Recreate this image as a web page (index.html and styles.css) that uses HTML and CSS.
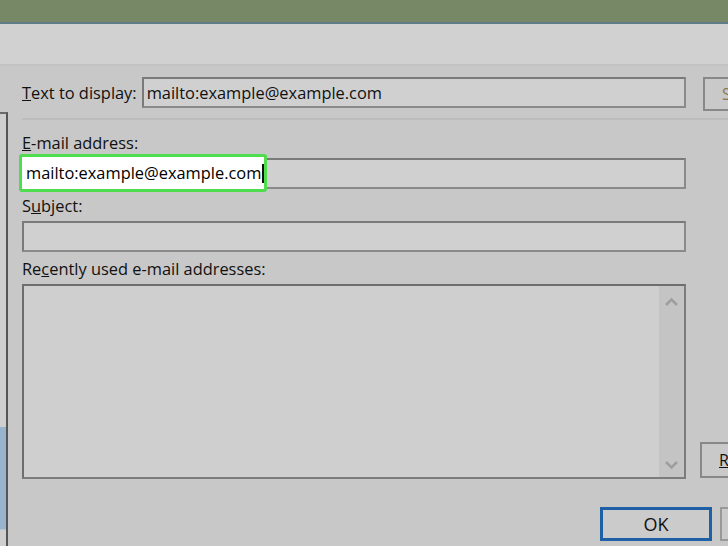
FILE: index.html
```html
<!DOCTYPE html>
<html lang="en">

<head>
    <meta charset="UTF-8">
    <title>Insert Hyperlink</title>
    <link rel="stylesheet" href="styles.css">
</head>

<body>
    <div class="title-bar"></div>
    <div class="header-band"></div>

    <div class="main">
        <div class="side-pane">
            <div class="side-pane-selected"></div>
        </div>

        <div class="content">
            <div class="dialog-body">
                <div class="form">
                    <div class="display-row">
                        <label class="field-label"><u>T</u>ext to display:</label>
                        <div class="text-box display-box">mailto:example@example.com</div>
                    </div>
                    <hr class="separator">

                    <label class="field-label block-label email-label"><u>E</u>-mail address:</label>
                    <div class="email-wrap">
                        <div class="text-box"></div>
                        <div class="highlight">mailto:example@example.com<span class="caret"></span></div>
                    </div>

                    <label class="field-label block-label">S<u>u</u>bject:</label>
                    <div class="text-box"></div>

                    <label class="field-label block-label">Re<u>c</u>ently used e-mail addresses:</label>
                    <div class="list-box">
                        <div class="scrollbar">
                            <svg width="15" height="10" viewBox="0 0 15 10"><path d="M2 8 L7.5 2.5 L13 8" fill="none" stroke="#9e9e9e" stroke-width="2.6"/></svg>
                            <svg width="15" height="10" viewBox="0 0 15 10"><path d="M2 2 L7.5 7.5 L13 2" fill="none" stroke="#9e9e9e" stroke-width="2.6"/></svg>
                        </div>
                    </div>
                </div>

                <div class="side-buttons">
                    <button class="side-button top-button">S</button>
                    <button class="side-button bottom-button"><u>R</u></button>
                </div>
            </div>

            <div class="footer">
                <button class="ok-button">OK</button>
                <button class="cancel-button"></button>
            </div>
        </div>
    </div>
</body>

</html>
```

FILE: styles.css
```css
body {
    margin: 0;
    background-color: #c8c8c8;
    font-family: "Open Sans", "Noto Sans", sans-serif;
    font-size: 16.4px;
    color: #111;
    overflow: hidden;
    height: 546px;
}

.title-bar {
    height: 22px;
    background-color: #778866;
    border-bottom: 2px solid #5f7d88;
}

.header-band {
    height: 40px;
    background-color: #d1d1d1;
    border-bottom: 2px solid #c3c3c3;
}

.main {
    display: flex;
    height: 480px;
}

/* left list pane, only its edge shows */
.side-pane {
    flex-shrink: 0;
    width: 6px;
    margin-top: 46px;
    border-top: 2px solid #6a6a6a;
    border-right: 2px solid #555;
    background-color: #cfcfcf;
    display: flex;
    flex-direction: column;
    justify-content: flex-end;
    padding-bottom: 16px;
}

.side-pane-selected {
    height: 102px;
    background-color: #98b4cc;
    border-bottom: 1px solid #b8c4cc;
}

.content {
    flex: 1;
    min-width: 0;
}

.dialog-body {
    display: flex;
    height: 437px;
}

.form {
    flex-shrink: 0;
    width: 664px;
    margin-left: 14px;
    padding-top: 11px;
}

.display-row {
    display: flex;
    align-items: center;
    gap: 5px;
}

.field-label {
    display: block;
    white-space: nowrap;
}

.text-box {
    height: 27px;
    background-color: #d0d0d0;
    border: 2px solid #7a7a7a;
    border-right-color: #8a8a8a;
    border-bottom-color: #8a8a8a;
    line-height: 27px;
    padding-left: 3px;
}

.display-box {
    flex: 1;
}

.separator {
    margin: 10px 0 0 0;
    border: none;
    border-top: 2px solid #bcbcbc;
    width: 720px;
}

.block-label {
    height: 20px;
    line-height: 20px;
    margin-top: 7px;
    margin-bottom: 5px;
}

.email-label {
    margin-top: 13px;
}

.email-wrap {
    position: relative;
}

.highlight {
    position: absolute;
    left: -3px;
    top: -4px;
    width: 238px;
    height: 32px;
    line-height: 32px;
    padding-left: 4px;
    white-space: nowrap;
    background-color: #fff;
    border: 3px solid #4fdc4f;
    border-radius: 3px;
    color: #000;
}

.caret {
    display: inline-block;
    width: 2px;
    height: 19px;
    margin-left: 1px;
    vertical-align: -4px;
    background-color: #111;
}

.list-box {
    height: 191px;
    background-color: #cfcfcf;
    border: 2px solid #6e6e6e;
    border-right-color: #7c7c7c;
    border-bottom-color: #7c7c7c;
    display: flex;
    justify-content: flex-end;
}

.scrollbar {
    width: 25px;
    background-color: #c4c4c4;
    display: flex;
    flex-direction: column;
    align-items: center;
    justify-content: space-between;
    padding: 11px 0 7px;
}

.side-buttons {
    flex: 1;
    min-width: 0;
    display: flex;
    flex-direction: column;
    justify-content: space-between;
    padding: 11px 0 25px 17px;
}

.side-button {
    height: 34px;
    background-color: #c9c9c9;
    border: 2px solid #888;
    border-right: none;
    font-family: inherit;
    font-size: 16px;
    text-align: left;
    padding: 0 0 0 17px;
    color: #111;
    overflow: hidden;
}

.top-button {
    color: #8a7a50;
}

.bottom-button {
    margin-left: -3px;
    height: 36px;
}

.footer {
    display: flex;
    justify-content: flex-end;
    gap: 8px;
    padding-top: 4px;
}

.ok-button {
    width: 112px;
    height: 34px;
    padding: 0;
    background-color: #cbcbcb;
    border: 3px solid #1f5fa6;
    font-family: inherit;
    font-size: 18px;
    color: #111;
}

.cancel-button {
    width: 8px;
    height: 34px;
    padding: 0;
    background-color: #cbcbcb;
    border: 2px solid #999;
    border-right: none;
}
```
